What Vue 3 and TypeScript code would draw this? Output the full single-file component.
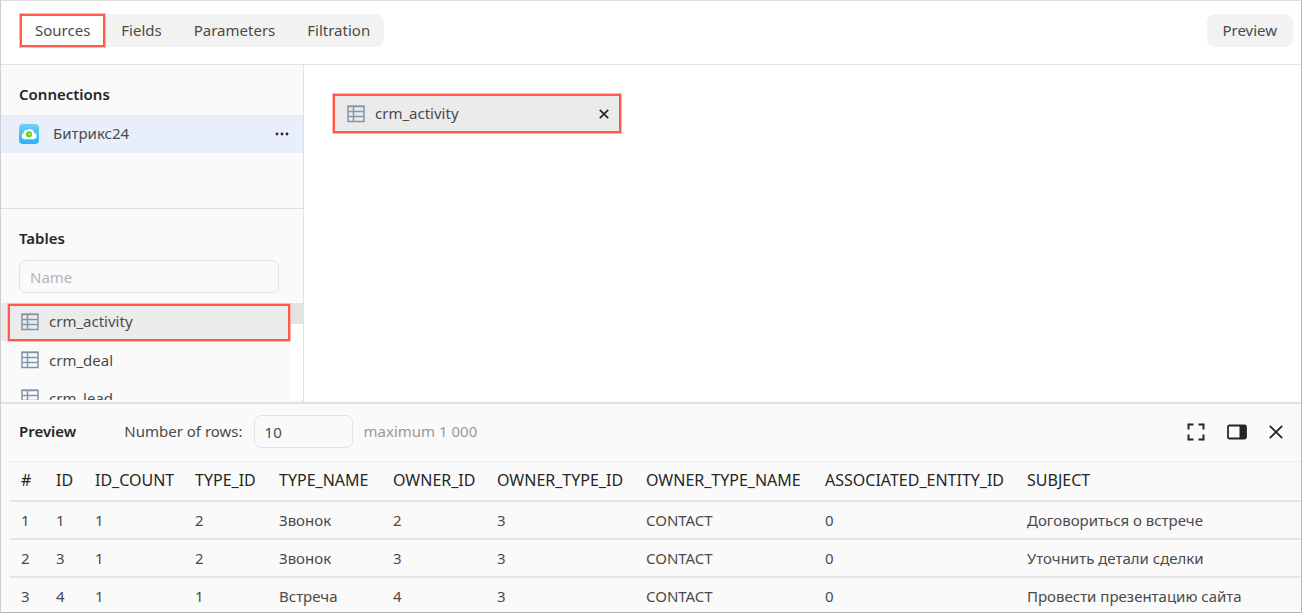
<script setup lang="ts">
import { ref } from 'vue'

const tabs = ['Sources', 'Fields', 'Parameters', 'Filtration']
const activeTab = ref('Sources')
const tables = ['crm_activity', 'crm_deal', 'crm_lead']
const selectedTable = ref('crm_activity')
const tableFilter = ref('')
const rowLimit = ref('10')

const columns = [
  '#', 'ID', 'ID_COUNT', 'TYPE_ID', 'TYPE_NAME', 'OWNER_ID',
  'OWNER_TYPE_ID', 'OWNER_TYPE_NAME', 'ASSOCIATED_ENTITY_ID', 'SUBJECT',
]
const rows = [
  ['1', '1', '1', '2', 'Звонок', '2', '3', 'CONTACT', '0', 'Договориться о встрече'],
  ['2', '3', '1', '2', 'Звонок', '3', '3', 'CONTACT', '0', 'Уточнить детали сделки'],
  ['3', '4', '1', '1', 'Встреча', '4', '3', 'CONTACT', '0', 'Провести презентацию сайта'],
]
</script>

<template>
  <div class="page">
    <header class="toolbar">
      <nav class="tabs" aria-label="Dataset sections">
        <button
          v-for="tab in tabs"
          :key="tab"
          type="button"
          class="tab"
          :class="{ active: tab === activeTab }"
          @click="activeTab = tab"
        >{{ tab }}</button>
      </nav>
      <button type="button" class="preview-button">Preview</button>
    </header>

    <main class="workspace">
      <aside class="sidebar">
        <section class="connections">
          <h2>Connections</h2>
          <div class="connection">
            <svg class="logo" width="20" height="20" viewBox="0 0 20 20" aria-hidden="true">
              <defs>
                <linearGradient id="sky" x1="0" y1="0" x2="0" y2="1">
                  <stop offset="0" stop-color="#72cdf8" />
                  <stop offset="1" stop-color="#2bb3f5" />
                </linearGradient>
              </defs>
              <rect width="20" height="20" rx="4" fill="url(#sky)" />
              <path d="M5.7 15.2a3.2 3.2 0 0 1-.9-6.2 2.6 2.6 0 0 1 3.4-2.9 4.3 4.3 0 0 1 7 2.8 3.2 3.2 0 0 1-.4 6.3z" fill="#fff" />
              <circle cx="10" cy="10.3" r="3" fill="#5fd013" />
              <path d="M10 8.9v1.6h1.4" fill="none" stroke="#fff" stroke-width="0.9" />
            </svg>
            <span class="connection-name">Битрикс24</span>
            <button type="button" class="icon-button" aria-label="Connection menu">
              <svg width="14" height="4" viewBox="0 0 14 4" fill="#262626">
                <circle cx="2" cy="2" r="1.4" /><circle cx="7" cy="2" r="1.4" /><circle cx="12" cy="2" r="1.4" />
              </svg>
            </button>
          </div>
        </section>

        <section class="sources">
          <h2>Tables</h2>
          <input v-model="tableFilter" class="field filter" type="text" placeholder="Name" aria-label="Table name">
          <div class="list-area">
            <ul class="list">
              <li v-for="name in tables" :key="name">
                <button
                  type="button"
                  class="table-item"
                  :class="{ selected: name === selectedTable }"
                  @click="selectedTable = name"
                >
                  <svg class="table-icon" width="18" height="18" viewBox="0 0 18 18" aria-hidden="true">
                    <path d="M1 1.5h16v15H1zM1 6.5h16M1 11.5h16M6.5 1.5v15" />
                    <path d="M0.5 1.2h17" />
                  </svg>
                  <span>{{ name }}</span>
                </button>
              </li>
            </ul>
            <div class="scroll-track"><div class="scroll-thumb"></div></div>
          </div>
        </section>
      </aside>

      <section class="canvas">
        <div class="chip">
          <svg class="table-icon" width="18" height="18" viewBox="0 0 18 18" aria-hidden="true">
            <path d="M1 1.5h16v15H1zM1 6.5h16M1 11.5h16M6.5 1.5v15" />
            <path d="M0.5 1.2h17" />
          </svg>
          <span class="chip-name">crm_activity</span>
          <button type="button" class="icon-button" aria-label="Remove table">
            <svg width="10" height="10" viewBox="0 0 10 10" fill="none" stroke="#262626" stroke-width="1.7">
              <path d="M0.8 0.8l8.4 8.4M9.2 0.8L0.8 9.2" />
            </svg>
          </button>
        </div>
      </section>
    </main>

    <section class="preview">
      <div class="preview-head">
        <h2 class="preview-title">Preview</h2>
        <label for="row-limit">Number of rows:</label>
        <input id="row-limit" v-model="rowLimit" class="field limit" type="text">
        <span class="hint">maximum 1 000</span>
        <div class="actions">
          <button type="button" class="icon-button" aria-label="Full screen">
            <svg width="18" height="18" viewBox="0 0 18 18" fill="none" stroke="#262626" stroke-width="2">
              <path d="M1.5 6.5v-5h5M11.5 1.5h5v5M16.5 11.5v5h-5M6.5 16.5h-5v-5" />
            </svg>
          </button>
          <button type="button" class="icon-button" aria-label="Dock to the right">
            <svg width="20" height="16" viewBox="0 0 20 16">
              <rect x="1" y="1.5" width="18" height="13" rx="1.5" fill="none" stroke="#262626" stroke-width="1.8" />
              <path d="M12.5 1.5H19v13h-6.5z" fill="#262626" />
            </svg>
          </button>
          <button type="button" class="icon-button" aria-label="Close preview">
            <svg width="14" height="14" viewBox="0 0 14 14" fill="none" stroke="#262626" stroke-width="1.9">
              <path d="M0.8 0.8l12.4 12.4M13.2 0.8L0.8 13.2" />
            </svg>
          </button>
        </div>
      </div>

      <table class="data">
        <colgroup>
          <col v-for="(column, index) in columns" :key="column" :class="`col-${index}`">
        </colgroup>
        <thead>
          <tr><th v-for="column in columns" :key="column" scope="col">{{ column }}</th></tr>
        </thead>
        <tbody>
          <tr v-for="row in rows" :key="row[0]">
            <td v-for="(cell, index) in row" :key="index">{{ cell }}</td>
          </tr>
        </tbody>
      </table>
    </section>
  </div>
</template>

<style>
body {
  margin: 0;
}
</style>

<style scoped>
.page,
.page * {
  box-sizing: border-box;
}

.page {
  display: flex;
  flex-direction: column;
  height: 100vh;
  overflow: hidden;
  border: 1px solid;
  border-color: #dcdcdc #b4b4b4 #b4b4b4 #cfcfcf;
  background: #fff;
  color: #4a4a4a;
  font-family: "Noto Sans", "Open Sans", sans-serif;
  font-size: 15px;
  line-height: 20px;
}

button,
input {
  margin: 0;
  font: inherit;
  color: inherit;
}

button {
  padding: 0;
  border: 0;
  background: none;
  cursor: pointer;
}

h2 {
  margin: 0;
  color: #262626;
  font-size: 15px;
  font-weight: 600;
  line-height: 20px;
}

.toolbar {
  display: flex;
  flex: none;
  align-items: center;
  justify-content: space-between;
  height: 64px;
  padding: 0 8px 4px 19px;
  border-bottom: 1px solid #e3e3e3;
}

.tabs {
  display: flex;
  border-radius: 8px;
  background: #f2f2f2;
}

.tab {
  height: 33px;
  padding: 0 16px 2px;
}

.tab:last-child {
  padding-right: 14px;
}

.tab.active {
  border: 2px solid #ff5a4c;
  padding: 0 13px 2px;
  background: #fff;
  box-shadow: 0 0 0 1px #ffb8b1;
}

.preview-button {
  height: 33px;
  padding: 0 16px 2px 15px;
  border-radius: 8px;
  background: #f2f2f2;
}

.workspace {
  display: flex;
  flex: 1;
  min-height: 0;
}

.sidebar {
  display: flex;
  flex: none;
  flex-direction: column;
  width: 303px;
  border-right: 1px solid #e0e0e0;
  background: #fafafa;
}

.connections {
  flex: none;
  height: 144px;
  padding-top: 19px;
  border-bottom: 1px solid #e0e0e0;
}

.connections h2,
.sources h2 {
  padding-left: 18px;
}

.connection {
  display: flex;
  align-items: center;
  height: 38px;
  margin-top: 11px;
  padding: 0 14px 0 18px;
  background: #e8eefa;
}

.connection-name {
  flex: 1;
  margin-left: 14px;
  padding-bottom: 2px;
}

.icon-button {
  display: flex;
}

.sources {
  display: flex;
  flex: 1;
  flex-direction: column;
  min-height: 0;
  padding-top: 19px;
}

.field {
  height: 33px;
  padding: 0 10px;
  border: 1px solid #e3e3e3;
  border-radius: 7px;
  background: #fafafa;
}

.field::placeholder {
  color: #b5b5b5;
  opacity: 1;
}

.filter {
  flex: none;
  margin: 12px 24px 10px 18px;
}

.list-area {
  display: flex;
  flex: 1;
  min-height: 0;
  overflow: hidden;
  margin-bottom: 2px;
}

.list {
  flex: 1;
  margin: 0;
  padding: 0;
  list-style: none;
}

.table-item {
  position: relative;
  display: flex;
  align-items: center;
  width: 100%;
  height: 38px;
  padding-left: 20px;
  gap: 10px;
}

.table-item.selected {
  background: #ebebeb;
}

.table-item.selected::after {
  content: "";
  position: absolute;
  inset: 1px 0 0 7px;
  border: 2px solid #ff5a4c;
  box-shadow: 0 0 0 1px #ffb8b1;
}

.table-item.selected span,
.chip-name {
  padding-bottom: 2px;
}

.table-icon {
  flex: none;
  fill: none;
  stroke: #8096ab;
  stroke-width: 1.5;
}

.scroll-track {
  width: 13px;
  background: #fff;
}

.scroll-thumb {
  height: 21px;
  background: #e3e3e3;
}

.canvas {
  flex: 1;
  padding: 29px;
}

.chip {
  display: flex;
  align-items: center;
  width: 288px;
  height: 39px;
  padding: 0 10px 0 12px;
  border: 2px solid #ff5a4c;
  background: #ebebeb;
  box-shadow: 0 0 0 1px #ffb8b1;
}

.chip-name {
  flex: 1;
  margin-left: 10px;
}

.preview {
  flex: 0 0 210px;
  overflow: hidden;
  border-top: 2px solid #e0e0e0;
  background: #fafafa;
}

.preview-head {
  display: flex;
  align-items: center;
  height: 57px;
  padding: 0 18px 2px;
}

.preview-title {
  margin-right: 48px;
}

.preview-title,
.preview-head label,
.hint {
  padding-bottom: 2px;
}

.limit {
  width: 99px;
  margin: 0 11px;
}

.hint {
  color: #999;
}

.actions {
  display: flex;
  align-items: center;
  gap: 22px;
  margin-left: auto;
}

.data {
  width: calc(100% - 9px);
  margin-left: 9px;
  border-top: 1px solid #ebebeb;
  border-spacing: 0;
  table-layout: fixed;
}

.data th,
.data td {
  height: 38px;
  padding: 0 0 0 11px;
  border-bottom: 2px solid #e6e6e6;
  text-align: left;
  white-space: nowrap;
}

.data th {
  height: 40px;
  padding-bottom: 2px;
  color: #262626;
  font-size: 16px;
  font-weight: 400;
}

.col-0 { width: 35px; }
.col-1 { width: 39px; }
.col-2 { width: 100px; }
.col-3 { width: 84px; }
.col-4 { width: 114px; }
.col-5 { width: 104px; }
.col-6 { width: 149px; }
.col-7 { width: 179px; }
.col-8 { width: 202px; }
</style>
